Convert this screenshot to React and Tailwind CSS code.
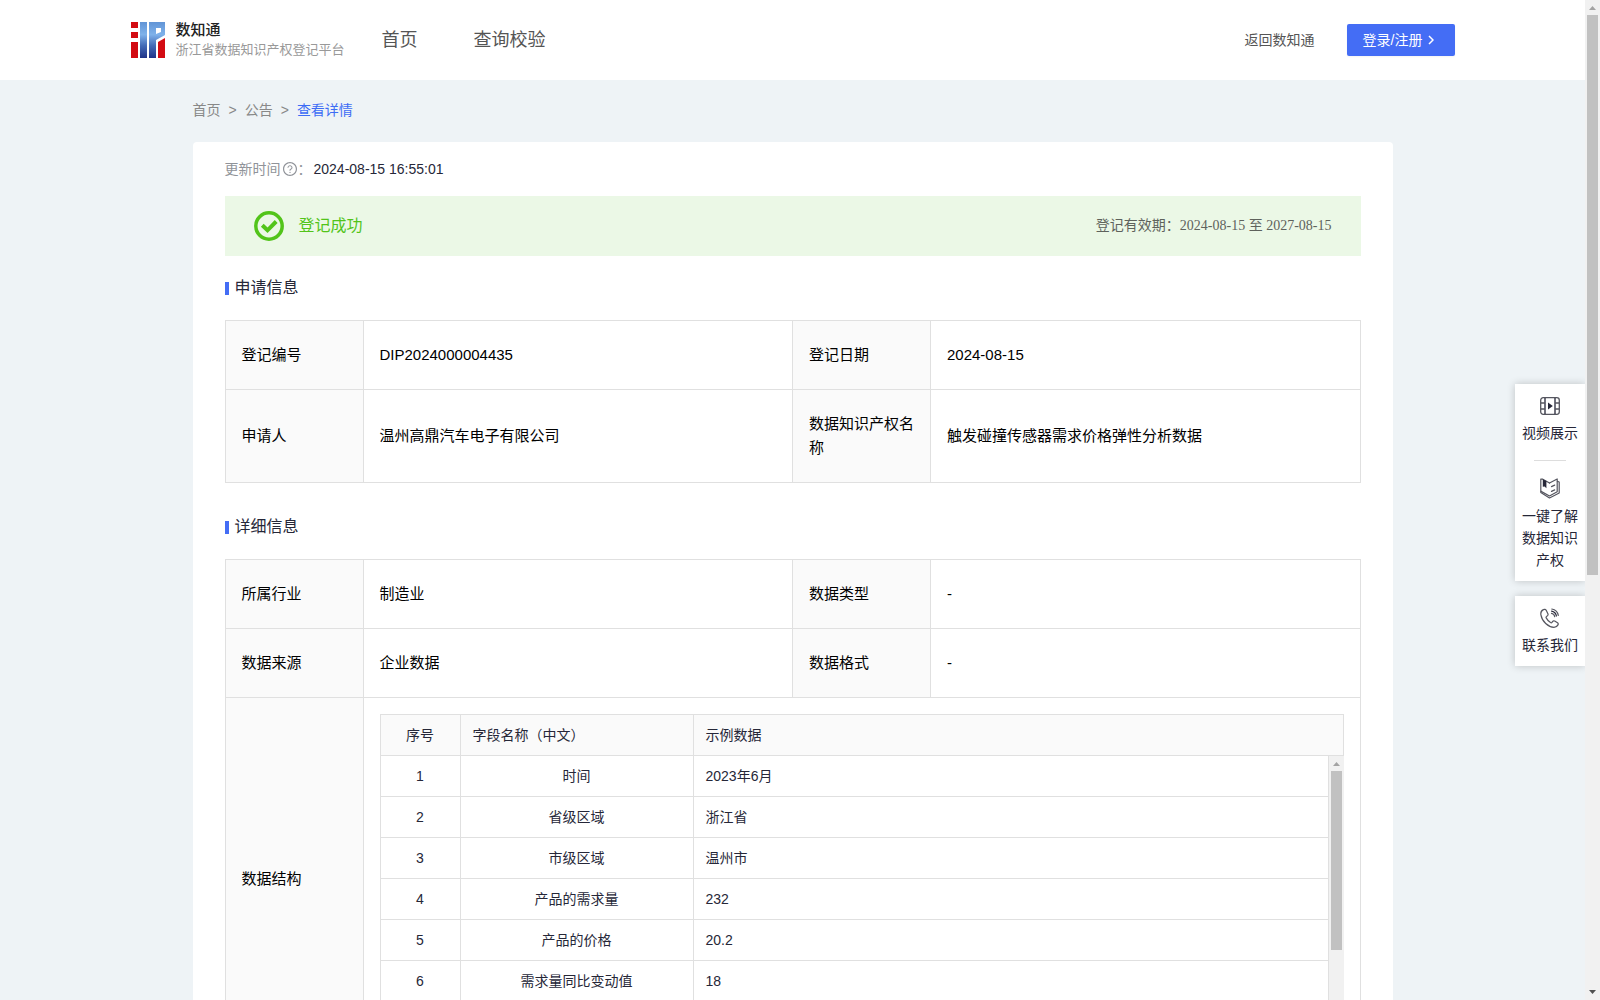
import { AiOutlineQuestionCircle } from "react-icons/ai"

const applyRows = [
  ["登记编号", "DIP2024000004435", "登记日期", "2024-08-15"],
  ["申请人", "温州高鼎汽车电子有限公司", "数据知识产权名称", "触发碰撞传感器需求价格弹性分析数据"],
]

const detailRows = [
  ["所属行业", "制造业", "数据类型", "-"],
  ["数据来源", "企业数据", "数据格式", "-"],
]

const fields = [
  ["时间", "2023年6月"],
  ["省级区域", "浙江省"],
  ["市级区域", "温州市"],
  ["产品的需求量", "232"],
  ["产品的价格", "20.2"],
  ["需求量同比变动值", "18"],
]

function Logo() {
  return (
    <svg width="34" height="36" viewBox="0 0 34 36" aria-hidden="true">
      <defs>
        <linearGradient id="logo-blue" x1="0" y1="0" x2="0" y2="36" gradientUnits="userSpaceOnUse">
          <stop offset="0" stopColor="#6194d6" />
          <stop offset="0.35" stopColor="#7fb2ea" />
          <stop offset="0.65" stopColor="#446cb8" />
          <stop offset="1" stopColor="#1f3388" />
        </linearGradient>
      </defs>
      <path d="M0 0h7v6H0zM0 10h7v6H0zM0 20h7v16H0z" fill="#d30b12" />
      <path d="M9 0h7v36H9z" fill="url(#logo-blue)" />
      <path
        d="M18 0h16v13l-9 5v18h-7zM25 6v6l5-2V6z"
        fill="url(#logo-blue)"
        fillRule="evenodd"
      />
      <path d="M27 20l7-4v20h-7z" fill="#d30b12" />
    </svg>
  )
}

function VideoIcon() {
  return (
    <svg width="20" height="18" viewBox="0 0 20 18" fill="none" stroke="#55565f" strokeWidth="1.3" aria-hidden="true">
      <rect x="0.7" y="0.7" width="18.6" height="16.6" rx="2.5" />
      <path d="M5 1v16M15 1v16" stroke="#262738" />
      <path d="M1 6h4M1 12h4M15 6h4M15 12h4" />
      <path d="M8 5.4v7.2l4.8-3.6z" fill="#262738" stroke="none" />
    </svg>
  )
}

function BookIcon() {
  return (
    <svg width="20" height="21" viewBox="0 0 20 21" fill="none" stroke="#55565f" strokeWidth="1.2" strokeLinejoin="round" strokeLinecap="round" aria-hidden="true">
      <path d="M9.500 5L2.800 1.200 0.800 1v13.500l8.700 5.500 9.700-5V4l-1.800-.6" />
      <path d="M9.500 5l7.700-4v12.800l-7.700 4.200-8.400-4.600" />
      <path d="M11.500 8.600l3.200-1.500M11.500 13.400l3.200-1.500" />
      <path d="M2.800 1.200L6.400 3v7.200L4.600 8.600 2.800 8.800z" fill="#262738" stroke="none" />
    </svg>
  )
}

function PhoneIcon() {
  return (
    <svg width="20" height="20" viewBox="0 0 20 20" fill="none" stroke="#55565f" strokeWidth="1.2" strokeLinejoin="round" strokeLinecap="round" aria-hidden="true">
      <path d="M3.4 1.6C1.4 2.6.5 4.4.9 6.8c.6 3.200 2.200 6.300 4.800 8.700 2.500 2.300 5.300 3.700 8.300 3.800 1.700 0 3.200-.9 4-2.400.4-.8.200-1.600-.5-2.100l-2.800-1.700c-.7-.4-1.500-.3-2 .3l-.7.9c-.4.5-1 .6-1.500.3-1.900-1.200-3.300-2.800-4.300-4.700-.3-.5-.1-1.100.4-1.500l.9-.7c.6-.5.7-1.200.4-1.900L6.200 2.300c-.5-1-1.700-1.300-2.800-.7z" />
      <path d="M11.500 5.400c1.800.3 2.900 1.500 3.200 3.200M11.800 1c3.700.6 5.900 2.800 6.500 6.400" />
      <path d="M11.600 3.200c2.700.5 4.300 2.100 4.800 4.800" stroke="#262738" />
    </svg>
  )
}

function Arrow({ down, className }) {
  return (
    <svg width="7" height="4" viewBox="0 0 7 4" className={className} aria-hidden="true">
      <path d={down ? "M0 0h7L3.500 4z" : "M0 4h7L3.500 0z"} fill="currentColor" />
    </svg>
  )
}

function SectionTitle({ children }) {
  return (
    <h2 className="flex items-center gap-1.5 text-base leading-6 text-[#262738]">
      <span className="h-[13px] w-1 bg-[#446df5]"></span>
      {children}
    </h2>
  )
}

function InfoRow({ row }) {
  return (
    <tr>
      {row.map((text, i) =>
        i % 2 === 0 ? (
          <th key={i} scope="row" className="border border-[#e0e0e0] bg-[#fafafa] px-4 py-[22px] text-left font-normal">
            {text}
          </th>
        ) : (
          <td key={i} className="border border-[#e0e0e0] px-4 py-[22px]">{text}</td>
        )
      )}
    </tr>
  )
}

function InfoTable({ rows, children }) {
  return (
    <table className="mt-5 w-full table-fixed border-collapse text-[15px] leading-6 text-black">
      <colgroup>
        <col className="w-[138px]" />
        <col />
        <col className="w-[138px]" />
        <col />
      </colgroup>
      <tbody>
        {rows.map((row) => <InfoRow key={row[0]} row={row} />)}
        {children}
      </tbody>
    </table>
  )
}

function FieldCols() {
  return (
    <colgroup>
      <col className="w-20" />
      <col className="w-[233px]" />
      <col />
    </colgroup>
  )
}

function FieldTable() {
  const cell = "h-[41px] border-r border-b border-[#e0e0e0] px-3 font-normal"
  return (
    <div className="border-t border-l border-[#e0e0e0] text-sm text-[#262738]">
      <table className="w-full table-fixed border-separate border-spacing-0 bg-[#fafafa]">
        <FieldCols />
        <thead>
          <tr>
            <th className={cell}>序号</th>
            <th className={`${cell} text-left`}>字段名称（中文）</th>
            <th className={`${cell} text-left`}>示例数据</th>
          </tr>
        </thead>
      </table>
      <div className="flex h-[287px] items-stretch overflow-hidden">
        <div className="min-w-0 flex-1 border-r border-[#e0e0e0]">
          <table className="w-full table-fixed border-separate border-spacing-0">
            <FieldCols />
            <tbody>
              {fields.map(([name, sample], i) => (
                <tr key={name}>
                  <td className={`${cell} text-center`}>{i + 1}</td>
                  <td className={`${cell} text-center`}>{name}</td>
                  <td className="h-[41px] border-b border-[#e0e0e0] px-3">{sample}</td>
                </tr>
              ))}
            </tbody>
          </table>
        </div>
        <div className="flex w-[15px] flex-col items-center bg-[#f1f1f1] pt-1.5">
          <Arrow className="text-[#a3a3a3]" />
          <div className="mt-[5px] h-[179px] w-[11px] bg-[#c1c1c1]"></div>
        </div>
      </div>
    </div>
  )
}

function App() {
  return (
    <div className="flex h-screen overflow-hidden bg-[#eef3f6] font-['Liberation_Sans','Noto_Sans_CJK_SC',sans-serif]">
      <div className="relative min-w-0 flex-1 overflow-hidden">

        {/* Top bar */}
        <header className="bg-white">
          <div className="mx-auto flex h-20 max-w-[1324px] items-center">
            <a href="#" className="flex w-[251px] items-center gap-[11px]">
              <Logo />
              <span className="whitespace-nowrap">
                <span className="block text-[15px] leading-5 font-medium text-[#222]">数知通</span>
                <span className="block text-[13px] leading-5 text-[#999]">浙江省数据知识产权登记平台</span>
              </span>
            </a>
            <nav className="flex flex-1 gap-14 text-lg text-[#555]">
              <a href="#">首页</a>
              <a href="#">查询校验</a>
            </nav>
            <a href="#" className="mr-8 text-sm text-[#555]">返回数知通</a>
            <button className="flex h-8 w-[108px] items-center gap-1.5 rounded-xs bg-[#446df5] px-4 text-sm whitespace-nowrap text-white shadow-xs">
              登录/注册
              <svg width="6" height="10" viewBox="0 0 6 10" fill="none" stroke="white" strokeWidth="1.5" aria-hidden="true">
                <path d="M1 1l4 4-4 4" />
              </svg>
            </button>
          </div>
        </header>

        <main className="mx-auto max-w-[1200px]">
          <nav className="flex items-center gap-2 pt-5 pb-[22px] text-sm text-[#888]">
            <a href="#">首页</a>
            <span>&gt;</span>
            <a href="#">公告</a>
            <span>&gt;</span>
            <a href="#" className="text-[#3d6cf5]">查看详情</a>
          </nav>

          <div className="rounded-sm bg-white px-8 pt-4 pb-8">
            <div className="flex h-[22px] items-center text-sm text-[#909399]">
              更新时间
              <AiOutlineQuestionCircle size={16} className="ml-px" />
              <span className="w-4">：</span>
              <span className="text-[#262738]">2024-08-15 16:55:01</span>
            </div>

            {/* Registration status */}
            <div className="mt-4 flex h-[60px] items-center bg-[#ebf8e6] px-[29px]">
              <svg width="30" height="30" viewBox="0 0 30 30" fill="none" stroke="#52c41a" strokeWidth="3.500" aria-hidden="true">
                <circle cx="15" cy="15" r="13.200" />
                <path d="M8.300 14.300l5.200 5 8.700-8.800" strokeWidth="4" />
              </svg>
              <span className="ml-[15px] flex-1 text-base text-[#52c41a]">登记成功</span>
              <span className="font-['Liberation_Serif','Noto_Sans_CJK_SC',serif] text-sm text-[#5e625c]">
                登记有效期：2024-08-15 至 2027-08-15
              </span>
            </div>

            <div className="mt-5">
              <SectionTitle>申请信息</SectionTitle>
              <InfoTable rows={applyRows} />
            </div>

            <div className="mt-8">
              <SectionTitle>详细信息</SectionTitle>
              <InfoTable rows={detailRows}>
                <tr>
                  <th scope="row" className="border border-[#e0e0e0] bg-[#fafafa] px-4 text-left font-normal">数据结构</th>
                  <td colSpan={3} className="border border-[#e0e0e0] p-4">
                    <FieldTable />
                  </td>
                </tr>
              </InfoTable>
            </div>
          </div>
        </main>

        {/* Floating shortcuts */}
        <aside className="absolute top-96 right-0 flex w-[70px] flex-col gap-[15px] text-center text-sm leading-[22px] text-[#262738]">
          <div className="flex flex-col items-center bg-white px-1.5 pt-[13px] pb-2.5 shadow-[0_0_8px_rgba(0,0,0,0.2)]">
            <a href="#" className="flex flex-col items-center gap-[7px]">
              <VideoIcon />
              视频展示
            </a>
            <div className="mt-4 mb-[17px] h-px w-8 bg-[#ddd]"></div>
            <a href="#" className="flex flex-col items-center gap-1.5">
              <BookIcon />
              一键了解数据知识产权
            </a>
          </div>
          <a href="#" className="flex flex-col items-center gap-1.5 bg-white px-1.5 pt-3 pb-2.5 shadow-[0_0_8px_rgba(0,0,0,0.2)]">
            <PhoneIcon />
            联系我们
          </a>
        </aside>
      </div>

      {/* Page scroll bar */}
      <div className="flex w-[15px] flex-col items-center bg-[#f1f1f1] py-1.5">
        <Arrow className="text-[#a3a3a3]" />
        <div className="mt-[5px] h-[560px] w-[11px] bg-[#c1c1c1]"></div>
        <Arrow down className="mt-auto text-[#505050]" />
      </div>
    </div>
  )
}

export default App
